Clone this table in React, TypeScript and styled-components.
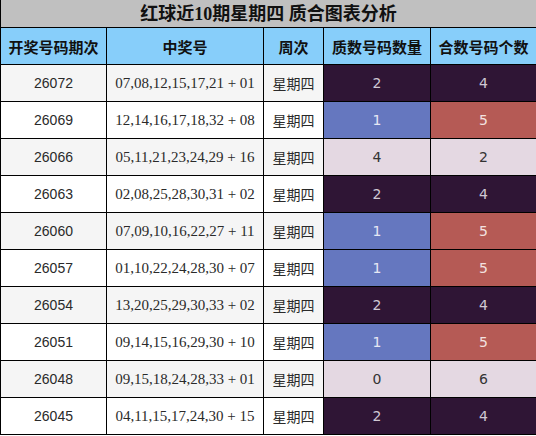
import React from 'react';
import styled, { createGlobalStyle } from 'styled-components';

const GlobalStyle = createGlobalStyle`
  html, body {
    margin: 0;
    padding: 0;
    background: #ffffff;
  }
`;

type Tone = 'dark' | 'blue' | 'red' | 'light';

const tones: Record<Tone, { bg: string; fg: string }> = {
  dark: { bg: '#2f1535', fg: '#d0c8d4' },
  blue: { bg: '#6577bf', fg: '#e6e8f4' },
  red: { bg: '#b55a55', fg: '#f3e2e0' },
  light: { bg: '#e4d8e2', fg: '#333333' },
};

interface Draw {
  issue: string;
  numbers: string;
  prime: number;
  composite: number;
}

const draws: Draw[] = [
  { issue: '26072', numbers: '07,08,12,15,17,21 + 01', prime: 2, composite: 4 },
  { issue: '26069', numbers: '12,14,16,17,18,32 + 08', prime: 1, composite: 5 },
  { issue: '26066', numbers: '05,11,21,23,24,29 + 16', prime: 4, composite: 2 },
  { issue: '26063', numbers: '02,08,25,28,30,31 + 02', prime: 2, composite: 4 },
  { issue: '26060', numbers: '07,09,10,16,22,27 + 11', prime: 1, composite: 5 },
  { issue: '26057', numbers: '01,10,22,24,28,30 + 07', prime: 1, composite: 5 },
  { issue: '26054', numbers: '13,20,25,29,30,33 + 02', prime: 2, composite: 4 },
  { issue: '26051', numbers: '09,14,15,16,29,30 + 10', prime: 1, composite: 5 },
  { issue: '26048', numbers: '09,15,18,24,28,33 + 01', prime: 0, composite: 6 },
  { issue: '26045', numbers: '04,11,15,17,24,30 + 15', prime: 2, composite: 4 },
];

const toneFor = (prime: number): [Tone, Tone] => {
  if (prime === 2) return ['dark', 'dark'];
  if (prime === 1) return ['blue', 'red'];
  return ['light', 'light'];
};

const Table = styled.table`
  width: 536px;
  table-layout: fixed;
  border-collapse: collapse;
  font-family: 'Liberation Serif', 'Noto Sans CJK SC', serif;
`;

const TitleCell = styled.th`
  height: 27px;
  padding: 0;
  background: #c0c0c0;
  border: 1px solid #000000;
  border-top: none;
  color: #111111;
  font-family: 'Liberation Serif', 'Noto Sans CJK SC', serif;
  font-size: 18px;
  font-weight: bold;
  text-align: center;
  vertical-align: middle;
  line-height: 1;
`;

const HeadCell = styled.th`
  height: 36px;
  padding: 0;
  background: #87cefa;
  border: 1px solid #000000;
  color: #111111;
  font-family: 'Noto Sans CJK SC', sans-serif;
  font-size: 15px;
  font-weight: bold;
  text-align: center;
  line-height: 1;
`;

const Row = styled.tr<{ $striped: boolean }>`
  background: ${({ $striped }) => ($striped ? '#f5f5f5' : '#ffffff')};
`;

const Cell = styled.td<{ $font?: 'sans' | 'serif' | 'cjk' }>`
  height: 36px;
  padding: 0;
  border: 1px solid #000000;
  color: #2a2a2a;
  text-align: center;
  font-size: ${({ $font }) => ($font === 'serif' ? '15px' : '14px')};
  line-height: 1;
  font-family: ${({ $font }) =>
    $font === 'sans'
      ? "'Liberation Sans', sans-serif"
      : $font === 'cjk'
      ? "'Noto Sans CJK SC', sans-serif"
      : "'Liberation Serif', serif"};
`;

const CountCell = styled.td<{ $tone: Tone }>`
  height: 36px;
  padding: 0;
  border: 1px solid #000000;
  text-align: center;
  font-family: 'DejaVu Sans', sans-serif;
  font-size: 14px;
  line-height: 1;
  background: ${({ $tone }) => tones[$tone].bg};
  color: ${({ $tone }) => tones[$tone].fg};
`;

export default function App() {
  return (
    <>
      <GlobalStyle />
      <Table>
        <colgroup>
          <col style={{ width: 106 }} />
          <col style={{ width: 157 }} />
          <col style={{ width: 60 }} />
          <col style={{ width: 107 }} />
          <col style={{ width: 106 }} />
        </colgroup>
        <thead>
          <tr>
            <TitleCell colSpan={5}>红球近10期星期四 质合图表分析</TitleCell>
          </tr>
          <tr>
            <HeadCell>开奖号码期次</HeadCell>
            <HeadCell>中奖号</HeadCell>
            <HeadCell>周次</HeadCell>
            <HeadCell>质数号码数量</HeadCell>
            <HeadCell>合数号码个数</HeadCell>
          </tr>
        </thead>
        <tbody>
          {draws.map((d, i) => {
            const [pt, ct] = toneFor(d.prime);
            return (
              <Row key={d.issue} $striped={i % 2 === 0}>
                <Cell $font="sans">{d.issue}</Cell>
                <Cell $font="serif">{d.numbers}</Cell>
                <Cell $font="cjk">星期四</Cell>
                <CountCell $tone={pt}>{d.prime}</CountCell>
                <CountCell $tone={ct}>{d.composite}</CountCell>
              </Row>
            );
          })}
        </tbody>
      </Table>
    </>
  );
}
